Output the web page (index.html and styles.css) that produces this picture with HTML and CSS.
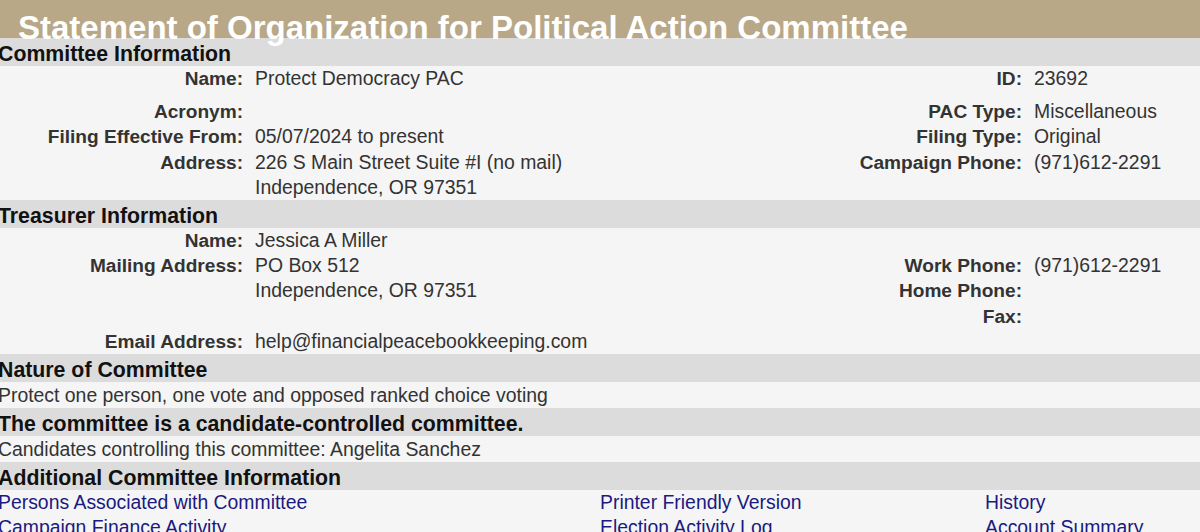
FILE: index.html
```html
<!DOCTYPE html>
<html lang="en">
<head>
<meta charset="utf-8">
<title>Statement of Organization for Political Action Committee</title>
<link rel="stylesheet" href="styles.css">
</head>
<body>
<div class="page">
  <header class="banner">
    <h1 class="title">Statement of Organization for Political Action Committee</h1>
  </header>

  <h2 class="bar">Committee Information</h2>
  <div class="info">
    <div class="lbl gapped">Name:</div><div class="val gapped">Protect Democracy PAC</div><div class="lbl gapped">ID:</div><div class="val gapped">23692</div>
    <div class="lbl">Acronym:</div><div class="val"></div><div class="lbl">PAC Type:</div><div class="val">Miscellaneous</div>
    <div class="lbl">Filing Effective From:</div><div class="val">05/07/2024 to present</div><div class="lbl">Filing Type:</div><div class="val">Original</div>
    <div class="lbl">Address:</div><div class="val">226 S Main Street Suite #I (no mail)</div><div class="lbl">Campaign Phone:</div><div class="val">(971)612-2291</div>
    <div class="lbl"></div><div class="val">Independence, OR 97351</div><div class="lbl"></div><div class="val"></div>
  </div>

  <h2 class="bar">Treasurer Information</h2>
  <div class="info">
    <div class="lbl">Name:</div><div class="val">Jessica A Miller</div><div class="lbl"></div><div class="val"></div>
    <div class="lbl">Mailing Address:</div><div class="val">PO Box 512</div><div class="lbl">Work Phone:</div><div class="val">(971)612-2291</div>
    <div class="lbl"></div><div class="val">Independence, OR 97351</div><div class="lbl">Home Phone:</div><div class="val"></div>
    <div class="lbl"></div><div class="val"></div><div class="lbl">Fax:</div><div class="val"></div>
    <div class="lbl">Email Address:</div><div class="val">help@financialpeacebookkeeping.com</div><div class="lbl"></div><div class="val"></div>
  </div>

  <h2 class="bar">Nature of Committee</h2>
  <p class="text">Protect one person, one vote and opposed ranked choice voting</p>

  <h2 class="bar">The committee is a candidate-controlled committee.</h2>
  <p class="text">Candidates controlling this committee: Angelita Sanchez</p>

  <h2 class="bar">Additional Committee Information</h2>
  <div class="links">
    <a href="#">Persons Associated with Committee</a>
    <a href="#">Printer Friendly Version</a>
    <a href="#">History</a>
    <a href="#">Campaign Finance Activity</a>
    <a href="#">Election Activity Log</a>
    <a href="#">Account Summary</a>
  </div>
</div>
</body>
</html>
```

FILE: styles.css
```css
html, body {
  margin: 0;
  padding: 0;
  background: #f5f5f5;
  overflow: hidden;
}

body {
  font-family: "Liberation Sans", Arial, Helvetica, sans-serif;
  font-size: 19.4px;
  color: #333333;
}

.page {
  margin-left: -2px;
  width: 1204px;
}

.banner {
  height: 38px;
  background: #b8a887;
}

.title {
  margin: 0;
  padding: 9px 0 0 20px;
  font-size: 33px;
  line-height: 38px;
  font-weight: bold;
  color: #ffffff;
  white-space: nowrap;
}

.bar {
  margin: 0;
  height: 28px;
  box-sizing: border-box;
  padding-top: 4px;
  font-size: 21.3px;
  line-height: 24px;
  font-weight: bold;
  color: #111111;
  background: #dcdcdc;
  white-space: nowrap;
}

.info {
  display: grid;
  grid-template-columns: 245px 555px 200px 1fr;
  column-gap: 12px;
  grid-auto-rows: auto;
  line-height: 25.2px;
}

.lbl {
  text-align: right;
  font-weight: bold;
  font-size: 19.1px;
  min-height: 25.2px;
  white-space: nowrap;
}

.val {
  min-height: 25.2px;
  white-space: nowrap;
}

.gapped {
  padding-bottom: 8px;
}

.text {
  margin: 0;
  line-height: 26px;
  white-space: nowrap;
}

.links {
  display: grid;
  grid-template-columns: 602px 385px 1fr;
  line-height: 25.2px;
}

.links a {
  color: #1b1a80;
  text-decoration: none;
  white-space: nowrap;
}
```
